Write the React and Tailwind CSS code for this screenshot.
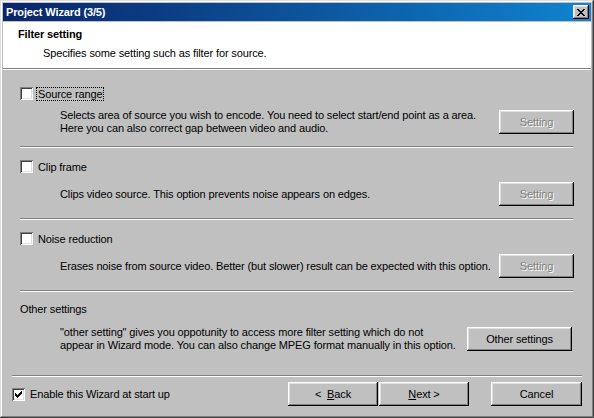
import React from "react";

const btnBevel =
  "shadow-[inset_-1px_-1px_#000,inset_1px_1px_#fff,inset_-2px_-2px_#808080,inset_2px_2px_#dfdfdf]";
const boxBevel =
  "shadow-[inset_1px_1px_#808080,inset_-1px_-1px_#fff,inset_2px_2px_#404040,inset_-2px_-2px_#dfdfdf]";

const filters = [
  {
    label: "Source range",
    focus: true,
    lines: [
      "Selects area of source you wish to encode. You need to select start/end point as a area.",
      "Here you can also correct gap between video and audio.",
    ],
  },
  {
    label: "Clip frame",
    lines: ["Clips video source. This option prevents noise appears on edges."],
  },
  {
    label: "Noise reduction",
    lines: [
      "Erases noise from source video. Better (but slower) result can be expected with this option.",
    ],
  },
];

function CheckBox({ checked }) {
  // classic 7x7 tick, one 3px column per x
  const ticks = [2, 3, 4, 3, 2, 1, 0];
  return (
    <div className={`w-[13px] h-[13px] bg-white shrink-0 flex items-center justify-center ${boxBevel}`}>
      {checked && (
        <svg width="7" height="7" viewBox="0 0 7 7" shapeRendering="crispEdges">
          {ticks.map((y, x) => (
            <rect key={x} x={x} y={y} width="1" height="3" fill="#000" />
          ))}
        </svg>
      )}
    </div>
  );
}

function Button({ children, disabled, className = "" }) {
  return (
    <div
      className={`h-[24px] flex items-center justify-center bg-[#c0c0c0] shrink-0 ${btnBevel} ${
        disabled ? "text-[#808080] [text-shadow:1px_1px_0_#fff]" : "text-black"
      } ${className}`}
    >
      {children}
    </div>
  );
}

function Separator({ className = "" }) {
  return <div className={`border-t border-b border-t-[#808080] border-b-white ${className}`} />;
}

function CloseGlyph() {
  const rows = [
    [0, 1, 6, 7],
    [1, 2, 5, 6],
    [2, 3, 4, 5],
    [3, 4],
    [2, 3, 4, 5],
    [1, 2, 5, 6],
    [0, 1, 6, 7],
  ];
  return (
    <svg width="8" height="7" viewBox="0 0 8 7" shapeRendering="crispEdges">
      {rows.map((xs, y) =>
        xs.map((x) => <rect key={`${x}-${y}`} x={x} y={y} width="1" height="1" fill="#000" />)
      )}
    </svg>
  );
}

export default function App() {
  return (
    <div className="w-[594px] h-[418px] p-[3px] bg-[#c0c0c0] flex flex-col font-['Liberation_Sans',Arial,sans-serif] text-[11px] leading-[13px] tracking-[-0.13px] text-black shadow-[inset_-1px_-1px_#404040,inset_1px_1px_#dfdfdf,inset_-2px_-2px_#808080,inset_2px_2px_#fff] overflow-hidden">
      {/* Title bar */}
      <div className="h-[18px] shrink-0 flex items-center px-[2px] mb-px bg-gradient-to-r from-[#0a246a] to-[#1084d0]">
        <span className="flex-1 pl-[1px] font-bold text-white">Project Wizard (3/5)</span>
        <div className={`w-[16px] h-[14px] bg-[#c0c0c0] flex items-center justify-center ${btnBevel}`}>
          <CloseGlyph />
        </div>
      </div>

      {/* Header */}
      <div className="h-[46px] shrink-0 bg-white pt-[6px] pl-[15px]">
        <div className="font-bold">Filter setting</div>
        <div className="mt-[6px] pl-[25px]">Specifies some setting such as filter for source.</div>
      </div>
      <Separator />

      {/* Filters */}
      <div className="pl-[17px] pr-[18px] pt-[17px]">
        {filters.map((f, i) => (
          <div key={i} className={i > 0 ? "mt-[12px]" : ""}>
            <div className="flex items-center h-[13px]">
              <CheckBox />
              <span
                className={`ml-[3px] px-[1px] border leading-[12px] ${
                  f.focus ? "border-dotted border-black" : "border-transparent"
                }`}
              >
                {f.label}
              </span>
            </div>
            <div className="mt-[9px] flex items-center">
              <div className="flex-1 pl-[40px] whitespace-nowrap">
                {f.lines.map((l, j) => (
                  <div key={j}>{l}</div>
                ))}
              </div>
              <Button disabled className="w-[75px] -mr-[1px]">
                Setting
              </Button>
            </div>
            <Separator className={i === 0 ? "mt-[11px]" : "mt-[12px]"} />
          </div>
        ))}

        <div className="mt-[11px]">Other settings</div>
        <div className="mt-[10px] flex items-center">
          <div className="flex-1 pl-[40px] whitespace-nowrap">
            <div>"other setting" gives you oppotunity to access more filter setting which do not</div>
            <div>appear in Wizard mode. You can also change MPEG format manually in this option.</div>
          </div>
          <Button className="w-[105px] mr-[1px]">Other settings</Button>
        </div>
      </div>

      {/* Footer */}
      <div className="px-[9px] mt-[23px]">
        <Separator />
        <div className="mt-[5px] flex items-center h-[24px]">
          <CheckBox checked />
          <span className="ml-[5px] flex-1">Enable this Wizard at start up</span>
          <Button className="w-[90px]">
            &lt;&nbsp;&nbsp;<u>B</u>ack
          </Button>
          <Button className="w-[90px] ml-px">
            <u>N</u>ext &gt;
          </Button>
          <Button className="w-[91px] ml-[22px]">Cancel</Button>
        </div>
      </div>
    </div>
  );
}
